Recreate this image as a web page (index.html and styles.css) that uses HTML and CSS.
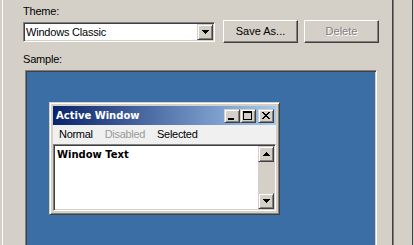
FILE: index.html
```html
<!DOCTYPE html>
<html>
<head>
<meta charset="utf-8">
<link rel="stylesheet" href="styles.css">
</head>
<body>
<div class="dialog">
  <div class="main">
    <div class="label label-theme">Theme:</div>
    <div class="theme-row">
      <div class="combo">
        <span class="combo-text">Windows Classic</span>
        <span class="raised combo-btn">
          <svg width="7" height="4" viewBox="0 0 7 4" shape-rendering="crispEdges"><path d="M0 0h7v1H0zM1 1h5v1H1zM2 2h3v1H2zM3 3h1v1H3z" fill="#000"/></svg>
        </span>
      </div>
      <button class="btn">Save As...</button>
      <button class="btn btn-disabled">Delete</button>
    </div>
    <div class="label label-sample">Sample:</div>
    <div class="sample">
      <div class="win">
        <div class="titlebar">
          <span class="title">Active Window</span>
          <div class="caps">
            <span class="raised cap">
              <svg width="12" height="10" viewBox="0 0 12 10" shape-rendering="crispEdges"><path d="M2 7h6v2H2z" fill="#000"/></svg>
            </span>
            <span class="raised cap">
              <svg width="12" height="10" viewBox="0 0 12 10" shape-rendering="crispEdges"><path d="M1 0h9v9H1zM2 2v6h7V2z" fill="#000" fill-rule="evenodd"/></svg>
            </span>
            <span class="raised cap cap-close">
              <svg width="12" height="10" viewBox="0 0 12 10" shape-rendering="crispEdges"><path d="M2 1h2v1H2zM8 1h2v1H8zM3 2h2v1H3zM7 2h2v1H7zM4 3h4v1H4zM5 4h2v1H5zM4 5h4v1H4zM3 6h2v1H3zM7 6h2v1H7zM2 7h2v1H2zM8 7h2v1H8z" fill="#000"/></svg>
            </span>
          </div>
        </div>
        <div class="menubar">
          <span class="menu-item">Normal</span>
          <span class="menu-item menu-disabled">Disabled</span>
          <span class="menu-item">Selected</span>
        </div>
        <div class="textarea">
          <div class="wintext">Window Text</div>
          <div class="vscroll">
            <span class="raised sbtn">
              <svg width="7" height="4" viewBox="0 0 7 4" shape-rendering="crispEdges"><path d="M3 0h1v1H3zM2 1h3v1H2zM1 2h5v1H1zM0 3h7v1H0z" fill="#000"/></svg>
            </span>
            <span class="track"></span>
            <span class="raised sbtn">
              <svg width="7" height="4" viewBox="0 0 7 4" shape-rendering="crispEdges"><path d="M0 0h7v1H0zM1 1h5v1H1zM2 2h3v1H2zM3 3h1v1H3z" fill="#000"/></svg>
            </span>
          </div>
        </div>
      </div>
    </div>
  </div>
  <div class="side"></div>
</div>
</body>
</html>
```

FILE: styles.css
```css
* { box-sizing: border-box; }
html, body { margin: 0; padding: 0; }
body {
  background: #d4d0c8;
  font-family: "Liberation Sans", Arial, sans-serif;
  font-size: 11px;
  color: #000;
  overflow: hidden;
}
.dialog {
  display: flex;
  height: 245px;
  padding-left: 2px;
  overflow: hidden;
}
.main {
  width: 390px;
  border-left: 1px solid #fff;
  padding-left: 20px;
  flex: none;
}
.side {
  width: 21px;
  flex: none;
  border-left: 1px solid #404040;
  border-right: 1px solid #404040;
  box-shadow: inset 1px 0 #808080;
}
.label {
  line-height: 13px;
  height: 13px;
  letter-spacing: -0.2px;
}
.label-theme { margin-top: 5px; }
.label-sample { margin-top: 10px; }
.theme-row {
  display: flex;
  align-items: flex-start;
  margin-top: 2px;
  height: 23px;
}
.combo {
  width: 192px;
  height: 20px;
  margin-top: 2px;
  display: flex;
  background: #fff;
  border-style: solid;
  border-width: 1px;
  border-color: #808080 #fff #fff #808080;
  box-shadow: inset 1px 1px #404040, inset -1px -1px #d4d0c8;
  padding: 1px;
}
.combo-text {
  flex: 1;
  line-height: 16px;
  padding-left: 1px;
  letter-spacing: -0.2px;
}
.raised {
  display: flex;
  align-items: center;
  justify-content: center;
  background: #d4d0c8;
  border-style: solid;
  border-width: 1px;
  border-color: #d4d0c8 #404040 #404040 #d4d0c8;
  box-shadow: inset 1px 1px #fff, inset -1px -1px #808080;
}
.combo-btn {
  width: 16px;
  height: 16px;
}
.btn {
  width: 75px;
  height: 23px;
  margin-left: 8px;
  padding: 0;
  font: inherit;
  color: #000;
  background: #d4d0c8;
  border-style: solid;
  border-width: 1px;
  border-color: #fff #404040 #404040 #fff;
  box-shadow: inset -1px -1px #808080;
  line-height: 13px;
}
.btn + .btn { margin-left: 6px; }
.btn-disabled {
  color: #808080;
  text-shadow: 1px 1px #fff;
}
.sample {
  margin-top: 4px;
  margin-left: 2px;
  width: 352px;
  height: 200px;
  background: #3a6ea5;
  border-style: solid;
  border-width: 1px;
  border-color: #808080 #fff #fff #808080;
  box-shadow: inset 1px 1px #404040, inset -1px -1px #d4d0c8;
  padding: 31px 0 0 23px;
}
.win {
  width: 231px;
  height: 113px;
  background: #d4d0c8;
  border-style: solid;
  border-width: 1px;
  border-color: #d4d0c8 #404040 #404040 #d4d0c8;
  box-shadow: inset 1px 1px #fff, inset -1px -1px #808080;
  padding: 3px;
  display: flex;
  flex-direction: column;
}
.titlebar {
  height: 19px;
  flex: none;
  display: flex;
  align-items: center;
  background: linear-gradient(to right, #0a246a, #a6caf0);
  padding: 0 2px 0 3px;
}
.title {
  flex: 1;
  color: #fff;
  font-family: "DejaVu Sans", sans-serif;
  font-weight: bold;
  font-size: 10px;
  line-height: 19px;
}
.caps {
  display: flex;
}
.cap {
  width: 16px;
  height: 14px;
}
.cap-close { margin-left: 2px; }
.menubar {
  height: 19px;
  flex: none;
  display: flex;
  align-items: center;
  background: #f0f0f0;
}
.menu-item {
  padding: 0 6px;
  line-height: 19px;
  letter-spacing: -0.3px;
}
.menu-disabled { color: #9a9a9a; }
.textarea {
  flex: 1;
  display: flex;
  background: #fff;
  border-style: solid;
  border-width: 1px;
  border-color: #808080 #fff #fff #808080;
  box-shadow: inset 1px 1px #404040, inset -1px -1px #d4d0c8;
  padding: 1px;
}
.wintext {
  flex: 1;
  font-family: "DejaVu Sans", sans-serif;
  font-weight: bold;
  font-size: 10px;
  line-height: 13px;
  padding: 2px 0 0 2px;
}
.vscroll {
  width: 16px;
  display: flex;
  flex-direction: column;
  background: #d4d0c8;
}
.sbtn {
  width: 16px;
  height: 16px;
  flex: none;
}
.track { flex: 1; }
```
